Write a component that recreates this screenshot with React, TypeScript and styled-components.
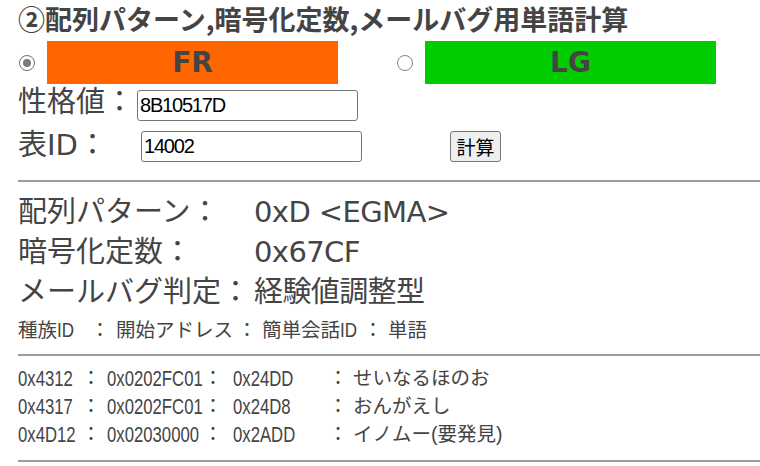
import React from "react";
import styled, { createGlobalStyle } from "styled-components";

const Global = createGlobalStyle`
  html, body { margin: 0; padding: 0; background: #fff; }
  body {
    font-family: "DejaVu Sans", "Noto Sans CJK JP", sans-serif;
    color: #444;
  }
`;

const Page = styled.div`
  padding: 0 0 0 18px;
  width: 742px;
  overflow: hidden;
`;

const Title = styled.h1`
  margin: 0;
  height: 38px;
  font-family: "Noto Sans CJK JP", sans-serif;
  font-weight: 700;
  font-size: 27px;
  line-height: 38px;
  white-space: nowrap;
  color: #444;
`;

const ChoiceRow = styled.div`
  display: flex;
  align-items: center;
  gap: 59px;
  height: 43px;
  margin-top: 3px;
  padding-left: 1px;
`;

const Choice = styled.div`
  display: flex;
  align-items: center;
  gap: 12px;
`;

const Radio = styled.span<{ $checked?: boolean }>`
  box-sizing: border-box;
  flex: none;
  width: 16px;
  height: 16px;
  border-radius: 50%;
  border: 1.5px solid ${(p) => (p.$checked ? "#6e6e6e" : "#858585")};
  background: #fff;
  display: flex;
  align-items: center;
  justify-content: center;
  &::after {
    content: "";
    width: 8px;
    height: 8px;
    border-radius: 50%;
    background: ${(p) => (p.$checked ? "#7a7a7a" : "transparent")};
  }
`;

const Swatch = styled.div<{ $bg: string }>`
  width: 291px;
  height: 43px;
  background: ${(p) => p.$bg};
  display: flex;
  align-items: center;
  justify-content: center;
  font-family: "DejaVu Sans", sans-serif;
  font-weight: 700;
  font-size: 28px;
  color: #444;
`;

const FieldRow = styled.div<{ $top: number }>`
  display: flex;
  align-items: flex-start;
  margin-top: ${(p) => p.$top}px;
`;

const FieldLabel = styled.span<{ $width: number }>`
  flex: none;
  width: ${(p) => p.$width}px;
  font-size: 29px;
  line-height: 28px;
  white-space: nowrap;
`;

const TextBox = styled.input<{ $offset?: number }>`
  box-sizing: border-box;
  flex: none;
  width: 221px;
  height: 31px;
  margin: ${(p) => p.$offset ?? 0}px 0 0 0;
  padding: 0 2px;
  border: 1px solid #767676;
  border-radius: 3px;
  background: #fff;
  color: #000;
  font-family: "Liberation Sans", sans-serif;
  font-size: 20px;
  letter-spacing: -1.2px;
  outline: none;
`;

const CalcButton = styled.button`
  box-sizing: border-box;
  flex: none;
  margin-left: 88px;
  width: 51px;
  height: 31px;
  padding: 0;
  border: 1px solid #767676;
  border-radius: 3px;
  background: #efefef;
  color: #000;
  font-family: "Noto Sans CJK JP", sans-serif;
  font-size: 19px;
  line-height: 1;
`;

const Divider = styled.hr<{ $top: number; $bottom?: number }>`
  height: 0;
  margin: ${(p) => p.$top}px 0 ${(p) => p.$bottom ?? 0}px 0;
  border: 0;
  border-top: 2px solid #9d9d9d;
`;

const Results = styled.div`
  display: grid;
  grid-template-columns: 236px auto;
  font-size: 29px;
  line-height: 40px;
  white-space: nowrap;
`;

const Value = styled.span`
  letter-spacing: -0.6px;
`;

const TableLine = styled.div<{ $cols: string; $top?: number }>`
  display: grid;
  grid-template-columns: ${(p) => p.$cols};
  margin-top: ${(p) => p.$top ?? 0}px;
  font-family: "Liberation Sans", "Noto Sans CJK JP", sans-serif;
  font-size: 19.5px;
  line-height: 27px;
  white-space: nowrap;
  color: #444;
`;

const Cell = styled.span<{ $pad?: number }>`
  padding-left: ${(p) => p.$pad ?? 0}px;
`;

/* narrow, tall figures like the reference's condensed gothic */
const Code = styled.span<{ $pad?: number }>`
  display: inline-block;
  margin-left: ${(p) => p.$pad ?? 0}px;
  font-size: 22px;
  transform: scaleX(0.76);
  transform-origin: left center;
`;

const Narrow = styled.span`
  display: inline-block;
  transform: scaleX(0.85);
  transform-origin: left center;
  font-size: 20px;
`;

const Sep = styled.span`
  text-align: center;
`;

const HEAD_COLS = "72px 20px 127px 20px 106px 20px auto";
const ROW_COLS = "63px 20px 102px 20px 105px 20px auto";

const rows = [
  ["0x4312", "0x0202FC01", "0x24DD", "せいなるほのお"],
  ["0x4317", "0x0202FC01", "0x24D8", "おんがえし"],
  ["0x4D12", "0x02030000", "0x2ADD", "イノムー(要発見)"],
];

export default function App() {
  return (
    <Page>
      <Global />
      <Title>②配列パターン,暗号化定数,メールバグ用単語計算</Title>

      <ChoiceRow>
        <Choice>
          <Radio $checked />
          <Swatch $bg="#ff6600">FR</Swatch>
        </Choice>
        <Choice>
          <Radio />
          <Swatch $bg="#00cc00">LG</Swatch>
        </Choice>
      </ChoiceRow>

      <FieldRow $top={4}>
        <FieldLabel $width={119}>性格値：</FieldLabel>
        <TextBox $offset={2} defaultValue="8B10517D" />
      </FieldRow>
      <FieldRow $top={10}>
        <FieldLabel $width={123}>表ID：</FieldLabel>
        <TextBox defaultValue="14002" />
        <CalcButton>計算</CalcButton>
      </FieldRow>

      <Divider $top={18} $bottom={10} />

      <Results>
        <span>配列パターン：</span>
        <Value>0xD &lt;EGMA&gt;</Value>
        <span>暗号化定数：</span>
        <Value>0x67CF</Value>
        <span>メールバグ判定：</span>
        <Value>経験値調整型</Value>
      </Results>

      <TableLine $cols={HEAD_COLS} $top={5}>
        <Cell>
          種族<Narrow>ID</Narrow>
        </Cell>
        <Sep>：</Sep>
        <Cell $pad={6}>開始アドレス</Cell>
        <Sep>：</Sep>
        <Cell $pad={5}>
          簡単会話<Narrow>ID</Narrow>
        </Cell>
        <Sep>：</Sep>
        <Cell $pad={5}>単語</Cell>
      </TableLine>

      <Divider $top={10} $bottom={9} />

      {rows.map((r) => (
        <TableLine key={r[0]} $cols={ROW_COLS}>
          <Cell>
            <Code>{r[0]}</Code>
          </Cell>
          <Sep>：</Sep>
          <Cell>
            <Code $pad={6}>{r[1]}</Code>
          </Cell>
          <Sep>：</Sep>
          <Cell>
            <Code $pad={10}>{r[2]}</Code>
          </Cell>
          <Sep>：</Sep>
          <Cell $pad={5}>{r[3]}</Cell>
        </TableLine>
      ))}

      <Divider $top={11} />
    </Page>
  );
}
